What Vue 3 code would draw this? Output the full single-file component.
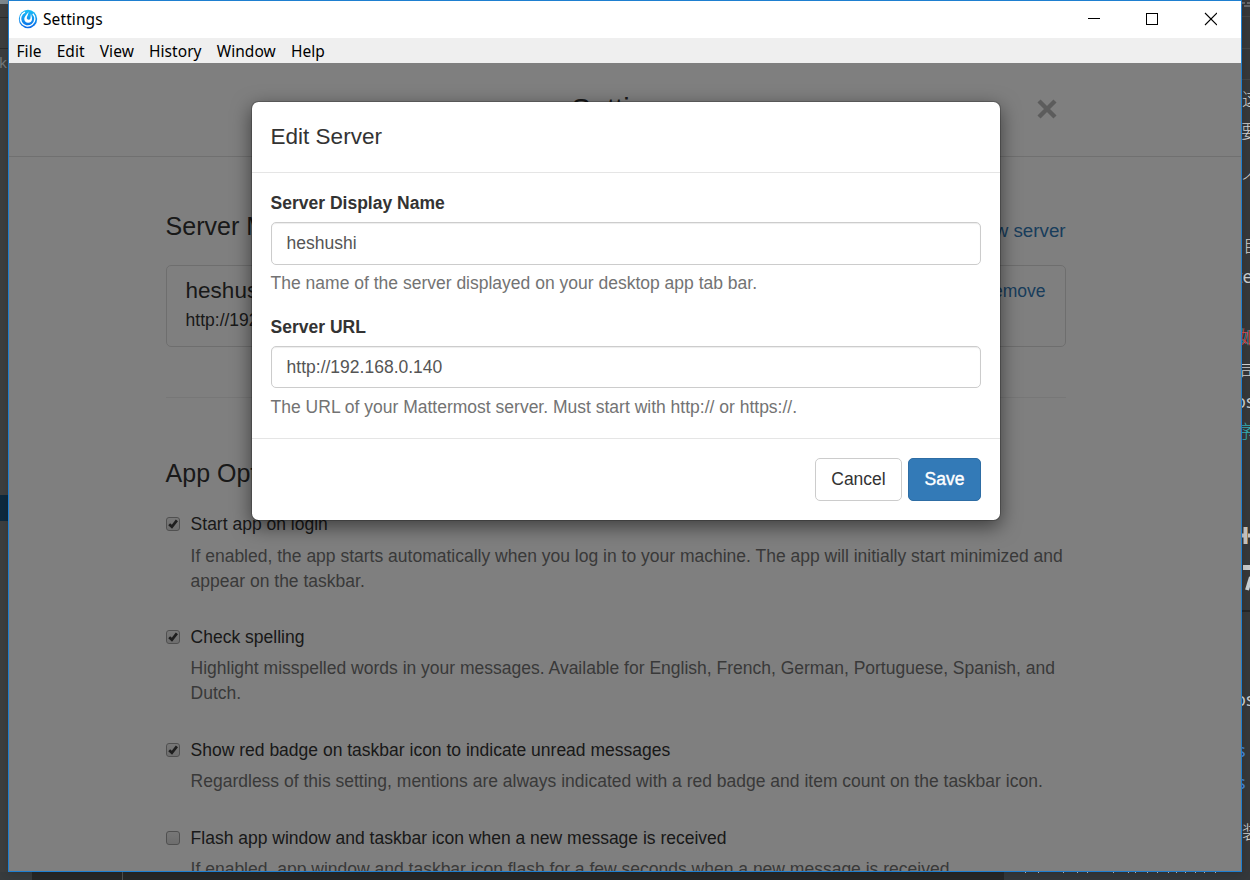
<script setup>
import { ref } from 'vue'

const menu = ['File', 'Edit', 'View', 'History', 'Window', 'Help']
const serverName = ref('heshushi')
const serverUrl = ref('http://192.168.0.140')
const options = [
  { label: 'Start app on login', on: true, help: ['If enabled, the app starts automatically when you log in to your machine. The app will initially start minimized and', 'appear on the taskbar.'] },
  { label: 'Check spelling', on: true, help: ['Highlight misspelled words in your messages. Available for English, French, German, Portuguese, Spanish, and', 'Dutch.'] },
  { label: 'Show red badge on taskbar icon to indicate unread messages', on: true, help: ['Regardless of this setting, mentions are always indicated with a red badge and item count on the taskbar icon.'] },
  { label: 'Flash app window and taskbar icon when a new message is received', on: false, help: ['If enabled, app window and taskbar icon flash for a few seconds when a new message is received.'] },
]
const ticks = [1025, 1038, 1063, 1077, 1087, 1113, 1128, 1135, 1147, 1157, 1168, 1176, 1185, 1195, 1204, 1215]
</script>

<template>
  <div class="desktop">
    <svg class="backdrop" width="1250" height="880" viewBox="0 0 1250 880">
      <rect width="1250" height="880" fill="#36383a" />
      <rect width="8" height="880" fill="#3c3e3f" />
      <rect width="8" height="4" fill="#7d888e" />
      <path d="M0 17.5h8M0 48.5h8" stroke="#292b2c" />
      <rect y="495" width="8" height="26" fill="#0d293e" />
      <text x="-1" y="68" font-size="15" fill="#74787a">k</text>
      <rect y="872" width="32" height="8" fill="#373b3d" />
      <rect x="32" y="872" width="972" height="8" fill="#262727" />
      <path d="M122.5 872v8" stroke="#505253" />
      <rect x="1004" y="872" width="246" height="8" fill="#34383b" />
      <path d="M1242 16.5h8M1242 48.5h8M1242 79.5h8" stroke="#434546" />
      <path d="M1242 3h3M1247 3h3M1244 6h6" stroke="#66686a" stroke-width="2" />
      <path d="M1242 611h8" stroke="#242628" stroke-width="2" />
      <rect v-for="t in ticks" :key="t" :x="t" y="872" width="1" height="1" fill="#bcbcbc" />
      <g class="cjk" font-size="18" fill="#d2d2d2">
        <text x="1242" y="106">这</text>
        <text x="1241" y="138">要</text>
        <text x="1242" y="187">个</text>
        <text x="1243" y="252">自</text>
        <text x="1238" y="344" fill="#35a0a6">如</text>
        <text x="1239" y="344" fill="#d9434b">如</text>
        <text x="1239" y="378">司</text>
        <text x="1236" y="438" fill="#35b0b6">序</text>
        <text x="1242" y="839">装</text>
      </g>
      <g font-size="18" fill="#c9cdd0">
        <text x="1236" y="283">te</text>
        <text x="1235" y="408">os</text>
        <text x="1235" y="706">os</text>
      </g>
      <g font-size="18" fill="#4a84d4">
        <text x="1237" y="757">s</text>
        <text x="1237" y="789">s</text>
      </g>
      <path d="M1242 535.5h8M1245.500 527v17" stroke="#c5c5c5" stroke-width="4" />
      <path d="M1247.500 527v17" stroke="#a98350" stroke-width="1" />
      <path d="M1243 567.500h7" stroke="#c8c8c8" stroke-width="5" />
      <path d="M1247 590l4-13" stroke="#c8d0d4" stroke-width="4" />
    </svg>

    <div class="window">
      <div class="titlebar">
        <svg class="logo" width="20" height="20" viewBox="0 0 20 20">
          <defs>
            <linearGradient id="blue" x1="0" y1="0" x2="0" y2="1">
              <stop offset="0" stop-color="#18c0f8" />
              <stop offset="1" stop-color="#0b68e6" />
            </linearGradient>
          </defs>
          <circle cx="10" cy="10" r="9.200" fill="url(#blue)" />
          <path d="M7 3.100A7.200 7.200 0 1 0 14.800 4.700" fill="none" stroke="#fff" stroke-width="1.400" />
          <path d="M10.600 2.600C9.800 5 6.300 7 6.300 10.300A3.900 3.900 0 0 0 14 10.500C14.400 8.500 13.200 6.600 12.900 4.600L12.400 9.400A2 2 0 0 1 8.800 9.600C8.500 7.600 10.700 5.700 10.600 2.600Z" fill="#fff" />
        </svg>
        <span class="app-name">Settings</span>
        <svg class="controls" width="129" height="14" viewBox="0 0 129 14">
          <g fill="none" stroke="#000" shape-rendering="crispEdges">
            <path d="M0 6.500h12" />
            <rect x="58.500" y="1.500" width="11" height="11" />
          </g>
          <path d="M117 1l12 12M129 1l-12 12" stroke="#000" stroke-width="1.100" />
        </svg>
      </div>
      <nav class="menubar">
        <span v-for="m in menu" :key="m">{{ m }}</span>
      </nav>

      <div class="client">
        <header class="page-head">
          <h1>Settings</h1>
          <svg class="close" width="20" height="20" viewBox="0 0 20 20">
            <path d="M2 2l16 16M18 2L2 18" stroke="#b8b8b8" stroke-width="4.400" />
          </svg>
        </header>
        <main class="page">
          <div class="section-head">
            <h2>Server Management</h2>
            <a>+ Add new server</a>
          </div>
          <div class="server">
            <div>
              <h4>heshushi</h4>
              <p>http://192.168.0.140</p>
            </div>
            <span class="actions"><a>Edit</a> - <a>Remove</a></span>
          </div>
          <hr />
          <h2 class="options-title">App Options</h2>
          <div v-for="o in options" :key="o.label" class="option">
            <span class="box">
              <svg v-if="o.on" width="12" height="12" viewBox="0 0 12 12">
                <path d="M2.200 6.200L4.900 8.800L9.900 2.400" fill="none" stroke="#3c3c3c" stroke-width="2.700" />
              </svg>
            </span>
            <div>
              <label>{{ o.label }}</label>
              <p><span v-for="l in o.help" :key="l">{{ l }}</span></p>
            </div>
          </div>
        </main>

        <div class="overlay">
          <section class="modal">
            <h4 class="modal-title">Edit Server</h4>
            <div class="modal-body">
              <div class="field">
                <label>Server Display Name</label>
                <input v-model="serverName" type="text" spellcheck="false" />
                <p>The name of the server displayed on your desktop app tab bar.</p>
              </div>
              <div class="field">
                <label>Server URL</label>
                <input v-model="serverUrl" class="short" type="text" spellcheck="false" />
                <p>The URL of your Mattermost server. Must start with http:// or https://.</p>
              </div>
            </div>
            <footer>
              <button class="btn">Cancel</button>
              <button class="btn primary">Save</button>
            </footer>
          </section>
        </div>
      </div>
    </div>
  </div>
</template>

<style>
html, body { overflow: hidden; }
</style>

<style scoped>
* { box-sizing: border-box; }
h1, h2, h4, p { margin: 0; font-weight: 400; }
.desktop {
  position: relative;
  width: 1250px;
  height: 880px;
  overflow: hidden;
  font: 17.5px/25px "Liberation Sans", Arial, sans-serif;
  color: #333;
}
.backdrop { position: absolute; inset: 0; font-family: "Noto Sans", sans-serif; }
.cjk { font-family: "Noto Sans CJK SC", sans-serif; font-weight: 300; }
.window {
  position: absolute;
  left: 8px;
  top: 0;
  width: 1234px;
  height: 872px;
  border: 1px solid #1e7fd0;
  background: #fff;
  display: flex;
  flex-direction: column;
  box-shadow: 0 2px 8px rgba(0, 0, 0, .15);
}
.titlebar {
  height: 37px;
  flex: none;
  display: flex;
  align-items: center;
  padding: 0 24px 2px 9px;
  color: #000;
  font: 15.5px/20px "Noto Sans", sans-serif;
  letter-spacing: .1px;
}
.app-name { margin-left: 5px; }
.controls { margin-left: auto; }
.menubar {
  height: 25px;
  flex: none;
  background: #efefef;
  color: #000;
  font: 15.5px/27px "Noto Sans", sans-serif;
  letter-spacing: .06px;
  display: flex;
  padding-left: 7.5px;
  gap: 15.1px;
}
.client { position: relative; flex: 1; overflow: hidden; }
.page-head {
  height: 94px;
  border-bottom: 1px solid #e0e0e0;
  display: grid;
  place-items: center;
  position: relative;
}
h1 { font-size: 29px; line-height: 32px; padding: 0 2px 2px 0; }
.close { position: absolute; left: 1028px; top: 36px; }
.page { width: 900px; margin-left: 156.6px; }
a { color: #337ab7; }
.section-head {
  display: flex;
  justify-content: space-between;
  padding-top: 55px;
  height: 108px;
}
.section-head a { font-size: 18.75px; padding-top: 6px; }
h2 { font-size: 25px; line-height: 28px; }
.server {
  height: 82px;
  border: 1px solid #ddd;
  border-radius: 5px;
  padding: 12px 19px;
  display: flex;
  justify-content: space-between;
}
.actions { padding-top: 1px; }
.server h4 { font-size: 22.5px; line-height: 25px; margin-bottom: 5px; }
hr { border: 0; border-top: 1px solid #eee; margin: 50px 0 61px; }
.options-title { margin-bottom: 25.35px; }
.option { display: flex; gap: 11px; margin-bottom: 31.55px; }
.option label { display: block; margin-bottom: 6.25px; }
.option p { color: #737373; }
.option p span { display: block; white-space: nowrap; }
.box {
  flex: none;
  width: 14px;
  height: 14px;
  margin-top: 5px;
  border: 1px solid #a0a0a0;
  border-radius: 3px;
  background: linear-gradient(#efefef, #dcdcdc);
}
.box svg { display: block; }
.overlay {
  position: absolute;
  inset: 0;
  background: rgba(0, 0, 0, .5);
  padding: 38px 0 0 242px;
}
.modal {
  width: 750px;
  height: 420px;
  border: 1px solid rgba(0, 0, 0, .2);
  border-radius: 7.5px;
  background: #fff;
  background-clip: padding-box;
  box-shadow: 0 6px 19px rgba(0, 0, 0, .5);
}
.modal-title {
  height: 71px;
  border-bottom: 1px solid #e5e5e5;
  padding: 18px 18.6px;
  font-size: 22.5px;
  line-height: 33px;
}
.modal-body { height: 265px; padding: 18px 18.6px 0; }
.field { height: 124px; }
.field label { display: block; font-weight: 700; margin-bottom: 6px; }
.field input {
  display: block;
  width: 100%;
  height: 43px;
  border: 1px solid #ccc;
  border-radius: 5px;
  padding: 0 15px 1px;
  font: inherit;
  color: #555;
  background: #fff;
  box-shadow: inset 0 1px 1px rgba(0, 0, 0, .075);
  margin-bottom: 6px;
}
.field input.short { height: 42px; padding-bottom: 0; margin-bottom: 7px; }
.field p { color: #737373; }
footer {
  border-top: 1px solid #e5e5e5;
  padding: 19px 19px 0;
  display: flex;
  justify-content: flex-end;
  gap: 6px;
}
.btn {
  height: 43px;
  width: 87px;
  padding: 0;
  font: inherit;
  color: #333;
  background: #fff;
  border: 1px solid #ccc;
  border-radius: 5px;
}
.btn.primary {
  width: 73px;
  color: #fff;
  background: #337ab7;
  border-color: #2e6da4;
  -webkit-text-stroke: .4px #fff;
}
</style>
